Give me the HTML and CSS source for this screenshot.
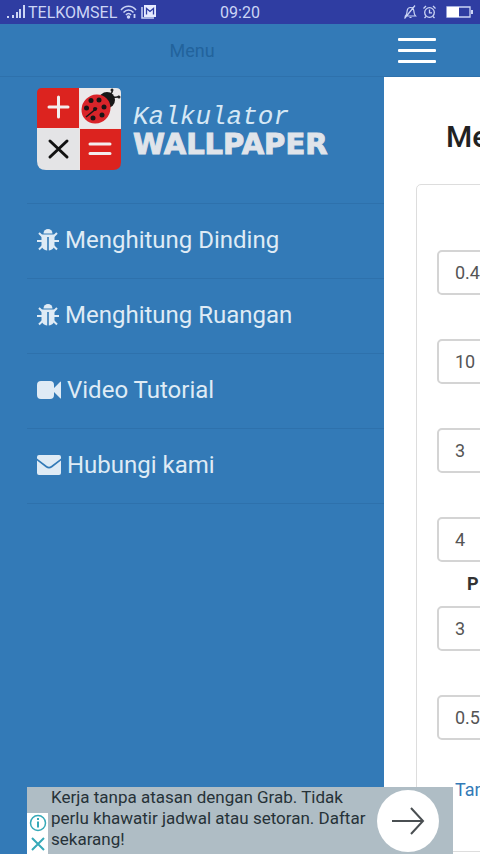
FILE: index.html
```html
<!DOCTYPE html>
<html lang="id">
<head>
  <meta charset="UTF-8">
  <title>Kalkulator Wallpaper</title>
  <meta name="viewport" content="width=device-width, initial-scale=1">
  <link rel="stylesheet" href="styles.css">
</head>
<body>

  <svg width="0" height="0" class="sprite" aria-hidden="true">
    <symbol id="icon-bug" viewBox="0 0 22 22">
      <path d="M6.500 4.500a4.500 4.500 0 0 1 9 0z"/>
      <path d="M4.500 5.500h13V15c0 4-2 6-5.700 6.500V8h-1.600v13.500C6.500 21 4.500 19 4.500 15z"/>
      <path d="M2 4l4 4M20 4l-4 4M0 12h5M22 12h-5M2 20.500l4.500-4.500M20 20.500l-4.500-4.500" fill="none" stroke="currentColor" stroke-width="2"/>
    </symbol>
  </svg>

  <div class="status-bar">
    <div class="status-left">
      <svg width="18" height="14" viewBox="0 0 18 14" fill="currentColor"><path d="M0 11h2v2H0zM5 10h2v3H5zM9 7h2v6H9zM12 4h2v9h-2zM16 0h2v13h-2z"/></svg>
      <span>TELKOMSEL</span>
      <svg width="18" height="14" viewBox="0 0 18 14" fill="none" stroke="currentColor" stroke-width="1.500"><path d="M1 5c4-5 11-5 15 0M3.500 7.500c3-3.500 7-3.500 10 0M6 10c1.500-2 3.500-2 5 0"/><circle cx="8.500" cy="12" r="1" fill="currentColor"/><path d="M14.500 9v4" stroke-width="1.800"/></svg>
      <svg width="16" height="14" viewBox="0 0 16 14"><path d="M1 2v11h12" fill="none" stroke="currentColor" stroke-width="1.500"/><path d="M3 0h12v12H3z" fill="#e6eaff"/><path d="M5.500 9.500V3.500l3.500 3 3.500-3v6" fill="none" stroke="#2f3da2" stroke-width="1.300"/></svg>
    </div>
    <span>09:20</span>
    <div class="status-right">
      <svg width="13" height="14" viewBox="0 0 13 14" fill="none" stroke="currentColor" stroke-width="1.200"><path d="M1.500 11h10C10 9.500 10 8 9.800 5.500 9.500 3.500 8.500 2.500 6.500 2.500S3.500 3.500 3.200 5.500C3 8 3 9.500 1.500 11zM5.500 12.500h2M0.500 13.500L11 0.500"/></svg>
      <svg width="13" height="14" viewBox="0 0 13 14" fill="none" stroke="currentColor" stroke-width="1.300"><circle cx="6.500" cy="7.500" r="4.800"/><path d="M6.500 4.500v3.300h2.500M0.500 3.500l2.500-2.500M12.500 3.500L10 1M3 11.500l-1.500 1.500M10 11.500l1.500 1.500"/></svg>
      <svg class="battery" width="27" height="12" viewBox="0 0 27 12"><path d="M1 1h23v10H1z" fill="none" stroke="currentColor" stroke-width="1.300"/><path d="M1 1h12v10H1z" fill="#fff"/><path d="M25 4h2v4h-2z" fill="currentColor"/></svg>
    </div>
  </div>

  <header class="app-bar">
    <span class="app-title">Menu</span>
    <button type="button" class="menu-toggle" aria-label="Menu">
      <span></span>
      <span></span>
      <span></span>
    </button>
  </header>

  <div class="layout">
    <nav class="sidebar">
      <div class="logo">
        <svg width="84" height="82" viewBox="0 0 84 82">
          <path d="M5 0H42V41H0V5Q0 0 5 0z" fill="#dc231f"/>
          <path d="M42 0H79Q84 0 84 5V41H42z" fill="#ebe9ea"/>
          <path d="M0 41H42V82H9Q0 82 0 73z" fill="#e4e4e6"/>
          <path d="M42 41H84V74Q84 82 76 82H42z" fill="#dc231f"/>
          <path d="M0 40.500H84M42.500 0V82" stroke="#ece4e4"/>
          <path d="M12 19H31M21.500 9V29M53 56H73M53 65.500H73" stroke="#f3eeee" stroke-width="3" stroke-linecap="round"/>
          <path d="M13 53L30 69M30 53L13 69" stroke="#111" stroke-width="3" stroke-linecap="round"/>
          <path d="M73 6Q76 5 75 1M76 9Q80 10 82 8" fill="none" stroke="#222" stroke-width="1.500"/>
          <circle cx="75" cy="2" r="1.500" fill="#222"/>
          <circle cx="82" cy="9" r="1.500" fill="#222"/>
          <circle cx="70" cy="12" r="8" fill="#171717"/>
          <ellipse cx="59" cy="21" rx="14" ry="15" transform="rotate(45 59 21)" fill="#d9242a"/>
          <path d="M49 29L60 20" stroke="#191516" stroke-width="1.500"/>
          <g fill="#191516">
            <circle cx="54" cy="12.500" r="2.500"/>
            <circle cx="62" cy="12" r="2.500"/>
            <circle cx="49.500" cy="20" r="2.500"/>
            <circle cx="58" cy="21" r="2"/>
            <circle cx="67" cy="19" r="2.500"/>
            <circle cx="65" cy="27" r="2.500"/>
            <circle cx="56" cy="30" r="2.500"/>
          </g>
        </svg>
        <div class="logo-text">
          <span class="logo-small">Kalkulator</span>
          <span class="logo-big">WALLPAPER</span>
        </div>
      </div>
      <ul class="menu">
        <li><a href="#dinding"><svg width="22" height="22"><use href="#icon-bug"/></svg>Menghitung Dinding</a></li>
        <li><a href="#ruangan"><svg width="22" height="22"><use href="#icon-bug"/></svg>Menghitung Ruangan</a></li>
        <li><a href="#video"><svg width="24" height="18" viewBox="0 0 24 18"><path d="M4 0h9q4 0 4 4v3l6-6q1-1 1 0v16q0 1-1 0l-6-6v3q0 4-4 4H4q-4 0-4-4V4Q0 0 4 0z"/></svg>Video Tutorial</a></li>
        <li><a href="#kontak"><svg width="24" height="20" viewBox="0 0 24 20"><path d="M2 0h20q2 0 2 2v1.500L14 11q-2 1.500-4 0L0 3.500V2Q0 0 2 0zM0 5.500l9 7q3 2 6 0l9-7V18q0 2-2 2H2q-2 0-2-2z"/></svg>Hubungi kami</a></li>
      </ul>
    </nav>

    <main class="content">
      <h1>Me</h1>
      <form class="panel">
        <label for="lebar"></label>
        <input id="lebar" type="text" value="0.4" aria-label="Lebar">
        <label for="panjang"></label>
        <input id="panjang" type="text" value="10" aria-label="Panjang">
        <label for="tinggi"></label>
        <input id="tinggi" type="text" value="3" aria-label="Tinggi">
        <label for="dinding"></label>
        <input id="dinding" type="text" value="4" aria-label="Dinding">
        <label for="pintu">P</label>
        <input id="pintu" type="text" value="3">
        <label for="motif"></label>
        <input id="motif" type="text" value="0.5" aria-label="Motif">
        <a class="more" href="#tambah">Tan</a>
      </form>
    </main>
  </div>

  <aside class="ad">
    <div class="ad-badges">
      <button type="button" aria-label="Info"><svg width="18" height="18" viewBox="0 0 18 18" fill="none" stroke="currentColor" stroke-width="1.500"><circle cx="9" cy="9" r="7.500"/><path d="M9 4v2M9 7.500V13.500" stroke-width="2"/></svg></button>
      <button type="button" aria-label="Tutup"><svg width="18" height="18" viewBox="0 0 18 18" fill="none" stroke="currentColor" stroke-width="2"><path d="M3 3l12 12M15 3L3 15"/></svg></button>
    </div>
    <p>Kerja tanpa atasan dengan Grab. Tidak perlu khawatir jadwal atau setoran. Daftar sekarang!</p>
    <a class="ad-go" href="#grab" aria-label="Daftar"><svg width="34" height="30" viewBox="0 0 34 30" fill="none" stroke="currentColor" stroke-width="2"><path d="M1 15h31M20 2l12 13-12 13"/></svg></a>
  </aside>

</body>
</html>
```
FILE: styles.css
```css
* { box-sizing: border-box; }
body {
  margin: 0;
  height: 100vh;
  display: flex;
  flex-direction: column;
  overflow: hidden;
  background: #fff;
  color: #333;
  font-family: Roboto, Arial, sans-serif;
}
svg {
  flex: none;
}
.sprite {
  position: absolute;
}

/* phone status bar */
.status-bar {
  flex: none;
  display: grid;
  grid-template-columns: 1fr auto 1fr;
  align-items: center;
  height: 24px;
  padding: 0 7px;
  background: #2f3da2;
  color: #ccd5f5;
  font-size: 16px;
}
.status-left,
.status-right {
  display: flex;
  align-items: center;
  gap: 3px;
}
.status-right {
  justify-content: flex-end;
  gap: 6px;
}
.battery {
  margin-left: 4px;
}

/* header */
.app-bar {
  flex: none;
  display: flex;
  align-items: center;
  height: 53px;
  background: #337ab7;
  border-bottom: 1px solid #2e71ac;
}
.app-title {
  width: 80%;
  text-align: center;
  color: #22639c;
  font-size: 18px;
}
.menu-toggle {
  display: flex;
  flex-direction: column;
  gap: 8px;
  margin-left: 14px;
  padding: 0;
  background: none;
  border: none;
  cursor: pointer;
}
.menu-toggle span {
  width: 38px;
  height: 3px;
  border-radius: 1px;
  background: #fff;
}

.layout {
  flex: 1;
  display: flex;
  min-height: 0;
  overflow: hidden;
}

/* sidebar */
.sidebar {
  flex: none;
  width: 80%;
  padding-left: 27px;
  background: #337ab7;
}
.logo {
  display: flex;
  gap: 12px;
  height: 126px;
  padding: 11px 0 0 10px;
  color: #d6e8f5;
}
.logo-text {
  display: flex;
  flex-direction: column;
  padding-top: 14px;
}
.logo-small {
  font: italic 26px/30px "Liberation Mono", monospace;
}
.logo-big {
  font: bold 29px/24px "DejaVu Sans", sans-serif;
  color: #e0e4ea;
  -webkit-text-stroke: 1px #e0e4ea;
}
.menu {
  list-style: none;
  margin: 0;
  padding: 0;
  border-top: 1px solid #2e71ac;
}
.menu li {
  border-bottom: 1px solid #2e71ac;
}
.menu a {
  display: flex;
  align-items: center;
  gap: 6px;
  height: 74px;
  padding: 0 0 2px 10px;
  color: #dfebf5;
  font-size: 24px;
  text-decoration: none;
}
.menu svg {
  fill: currentColor;
}

/* page pushed aside by the open menu */
.content {
  flex: none;
  width: 100%;
  padding: 0 32px;
}
h1 {
  margin: 40px 0 0;
  padding-left: 30px;
  font-size: 30px;
  font-weight: 500;
  line-height: 40px;
  color: #222;
}
.panel {
  display: flex;
  flex-direction: column;
  margin-top: 27px;
  padding: 21px 20px 49px;
  border: 1px solid #ddd;
  border-radius: 5px;
}
.panel label {
  height: 44px;
  padding: 10px 30px 0;
  font-size: 18px;
  font-weight: 700;
  line-height: 24px;
}
.panel input {
  width: 100%;
  height: 45px;
  padding: 0 16px;
  border: 2px solid #d4d4d4;
  border-radius: 5px;
  background: #fff;
  color: #555;
  font: 18px Roboto, Arial, sans-serif;
}
.more {
  margin-top: 38px;
  padding-left: 18px;
  color: #337ab7;
  font-size: 18px;
  line-height: 24px;
  text-decoration: none;
}

/* banner */
.ad {
  position: fixed;
  bottom: 0;
  left: 50%;
  transform: translateX(-50%);
  display: flex;
  width: 426px;
  max-width: 100%;
  height: 67px;
  background: #afbdc5;
}
.ad-badges {
  align-self: flex-end;
  display: flex;
  flex-direction: column;
  width: 21px;
  height: 41px;
  background: #fff;
}
.ad-badges button {
  flex: 1;
  display: flex;
  align-items: center;
  justify-content: center;
  padding: 0;
  background: none;
  border: none;
  color: #36a9b8;
}
.ad p {
  flex: 1;
  margin: 0;
  padding-left: 3px;
  color: #263238;
  font-size: 17px;
  line-height: 21px;
}
.ad-go {
  flex: none;
  align-self: center;
  display: flex;
  align-items: center;
  justify-content: center;
  width: 62px;
  height: 62px;
  margin-right: 14px;
  border-radius: 50%;
  background: #fff;
  color: #4a4f52;
}
```
